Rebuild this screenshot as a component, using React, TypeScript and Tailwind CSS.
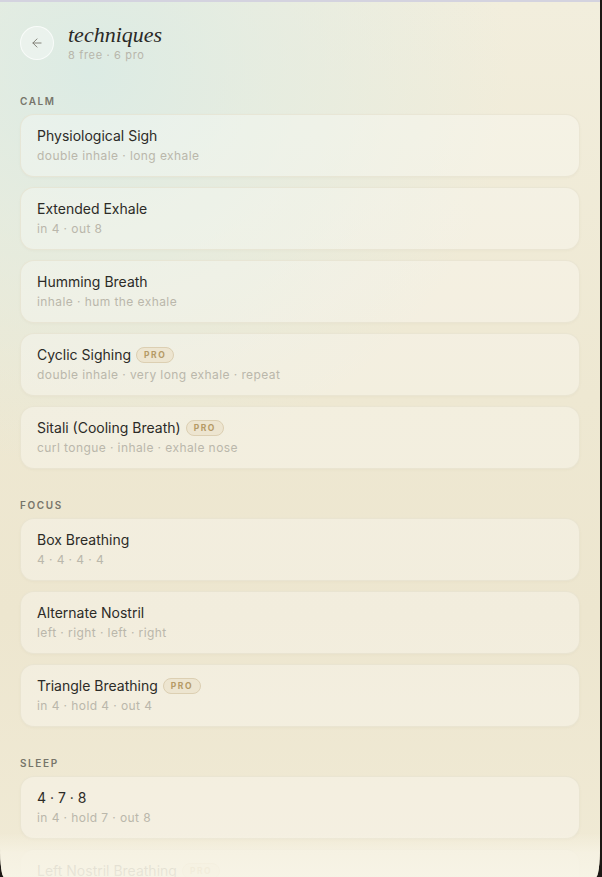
import { ArrowLeft } from "lucide-react";

type Technique = { name: string; steps: string; pro?: boolean };

const SECTIONS: { label: string; items: Technique[] }[] = [
  {
    label: "calm",
    items: [
      { name: "Physiological Sigh", steps: "double inhale · long exhale" },
      { name: "Extended Exhale", steps: "in 4 · out 8" },
      { name: "Humming Breath", steps: "inhale · hum the exhale" },
      { name: "Cyclic Sighing", steps: "double inhale · very long exhale · repeat", pro: true },
      { name: "Sitali (Cooling Breath)", steps: "curl tongue · inhale · exhale nose", pro: true },
    ],
  },
  {
    label: "focus",
    items: [
      { name: "Box Breathing", steps: "4 · 4 · 4 · 4" },
      { name: "Alternate Nostril", steps: "left · right · left · right" },
      { name: "Triangle Breathing", steps: "in 4 · hold 4 · out 4", pro: true },
    ],
  },
  {
    label: "sleep",
    items: [
      { name: "4 · 7 · 8", steps: "in 4 · hold 7 · out 8" },
      { name: "Left Nostril Breathing", steps: "block right · breathe left", pro: true },
      { name: "Body Scan Breath", steps: "slow · soften · release" },
      { name: "Coherent Breathing", steps: "in 5 · out 5", pro: true },
    ],
  },
];

function ProBadge() {
  return (
    <span className="ml-[5px] inline-flex h-[16px] items-center rounded-full border border-[#dccfb2] bg-[#ede5d0] px-[7px] text-[8.5px] font-bold tracking-[0.18em] text-[#b59a66]">
      PRO
    </span>
  );
}

function TechniqueCard({ t }: { t: Technique }) {
  return (
    <div className="rounded-[14px] border border-[rgba(226,220,198,0.55)] bg-[rgba(255,255,255,0.3)] px-[16px] py-[12px] shadow-[0_1px_2px_rgba(180,170,140,0.08)]">
      <div className="flex items-center text-[14px] leading-[18px] text-[#2c2b27]">
        {t.name}
        {t.pro && <ProBadge />}
      </div>
      <div className="mt-[3px] text-[12px] leading-[16px] tracking-[0.035em] text-[#bab7ab]">
        {t.steps}
      </div>
    </div>
  );
}

export default function App() {
  return (
    <div className="h-[877px] w-full bg-[#1c1814]">
      <div
        className="relative mr-[2px] h-full overflow-hidden rounded-bl-[4px_30px] rounded-br-[4px_30px] border-t-2 border-[#d4d3df] bg-[radial-gradient(ellipse_70%_45%_at_15%_8%,#dcebe4_0%,rgba(222,236,228,0.6)_40%,rgba(240,235,218,0)_100%),linear-gradient(180deg,#f2eedd_0%,#eee8d2_45%,#ede6cf_70%,#f0ead5_100%)]"
        style={{ fontFamily: "Inter, 'Noto Sans', sans-serif" }}
      >
        <div className="px-5 pt-[21px]">
          <header className="flex items-center gap-[14px]">
            <button className="flex h-[34px] w-[34px] items-center justify-center rounded-full border border-[rgba(255,255,255,0.7)] bg-[rgba(255,255,255,0.35)] text-[#7d7b72]">
              <ArrowLeft size={14} strokeWidth={1.6} />
            </button>
            <div className="flex flex-col">
              <h1
                className="text-[22px] italic leading-[24px] text-[#2a2926]"
                style={{ fontFamily: "'Liberation Serif', 'DejaVu Serif', serif" }}
              >
                techniques
              </h1>
              <p className="mt-[1px] text-[11px] leading-[14px] tracking-[0.06em] text-[#b8b6ab]">
                8 free · 6 pro
              </p>
            </div>
          </header>

          <div className="mt-[33px] flex flex-col gap-[30px]">
            {SECTIONS.map((s) => (
              <section key={s.label}>
                <h2 className="mb-[7px] text-[10px] font-semibold uppercase leading-[12px] tracking-[0.16em] text-[#77756a]">
                  {s.label}
                </h2>
                <div className="flex flex-col gap-[10px]">
                  {s.items.map((t) => (
                    <TechniqueCard key={t.name} t={t} />
                  ))}
                </div>
              </section>
            ))}
          </div>
        </div>

        <div className="pointer-events-none absolute inset-x-0 bottom-0 h-[44px] bg-[linear-gradient(180deg,rgba(246,242,227,0)_0%,rgba(246,242,227,0.88)_45%,rgba(247,244,230,0.93)_100%)]" />
      </div>
    </div>
  );
}
